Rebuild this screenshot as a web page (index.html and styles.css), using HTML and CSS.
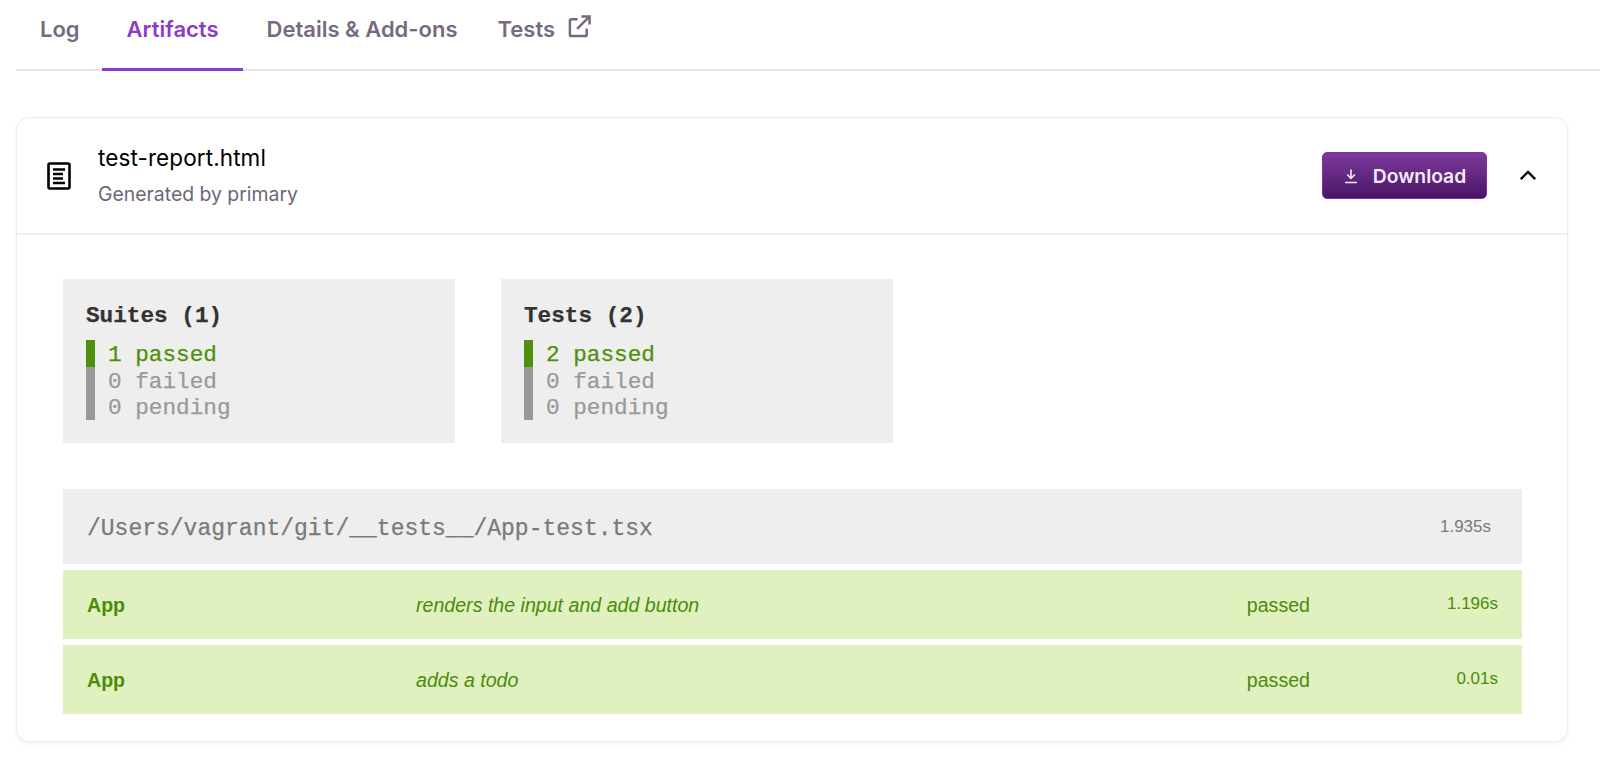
FILE: index.html
```html
<!DOCTYPE html>
<html lang="en">
<head>
<meta charset="utf-8">
<title>Artifacts</title>
<link rel="stylesheet" href="styles.css">
</head>
<body>
<nav class="tabs">
  <a class="tab tab-first">Log</a>
  <a class="tab active">Artifacts</a>
  <a class="tab">Details &amp; Add-ons</a>
  <a class="tab tab-ext">Tests
    <svg class="ext" viewBox="0 0 24 24" fill="none" stroke="currentColor" stroke-width="2.6"><path d="M10 4.500H3.500a1.500 1.500 0 0 0-1.500 1.500v14.500A1.500 1.500 0 0 0 3.500 22H18a1.500 1.500 0 0 0 1.500-1.500V14"/><path d="M9.500 14.500 22 2M14 1.500h8.500V10"/></svg>
  </a>
</nav>
<section class="card">
  <header class="card-head">
    <svg class="doc" viewBox="0 0 24 28" fill="none" stroke="#000"><rect x="1.500" y="1.500" width="21" height="25" rx="1.500" stroke-width="2.600"/><path stroke-width="2.400" d="M6 7.500h12M6 12h10M6 16.500h10M6 21h12"/></svg>
    <div class="file">
      <div class="file-name">test-report.html</div>
      <div class="file-sub">Generated by primary</div>
    </div>
    <button class="download">
      <svg class="dl" viewBox="0 0 16 16" fill="none" stroke="currentColor" stroke-width="1.600"><path d="M8 1.500v8.500M4.200 6.500 8 10.300l3.800-3.800M2 14.500h12"/></svg>
      Download
    </button>
    <svg class="chev" viewBox="0 0 20 12" fill="none" stroke="#000" stroke-width="2.600"><path d="M2 10.500 10 2.500l8 8"/></svg>
  </header>
  <div class="report">
    <div class="summary">
      <div class="box">
        <div class="box-title">Suites (1)</div>
        <ul class="stats">
          <li class="stat pass">1 passed</li>
          <li class="stat">0 failed</li>
          <li class="stat">0 pending</li>
        </ul>
      </div>
      <div class="box">
        <div class="box-title">Tests (2)</div>
        <ul class="stats">
          <li class="stat pass">2 passed</li>
          <li class="stat">0 failed</li>
          <li class="stat">0 pending</li>
        </ul>
      </div>
    </div>
    <div class="path-row">
      <span class="path">/Users/vagrant/git/__tests__/App-test.tsx</span>
      <span class="path-time">1.935s</span>
    </div>
    <div class="test-row">
      <span class="t-suite">App</span>
      <span class="t-name">renders the input and add button</span>
      <span class="t-status">passed</span>
      <span class="t-time">1.196s</span>
    </div>
    <div class="test-row">
      <span class="t-suite">App</span>
      <span class="t-name">adds a todo</span>
      <span class="t-status">passed</span>
      <span class="t-time">0.01s</span>
    </div>
  </div>
</section>
</body>
</html>
```
FILE: styles.css
```css
* { box-sizing: border-box; }
html, body { margin: 0; height: 762px; overflow: hidden; background: #fff; }
body { padding: 0 0 0 16px; font-family: Inter, "Liberation Sans", sans-serif; }

.tabs {
  display: flex;
  height: 71px;
  border-bottom: 2px solid #e8e5ea;
}
.tab {
  display: flex;
  align-items: flex-start;
  gap: 13px;
  height: 71px;
  padding: 14px 24px 0;
  font-size: 22px;
  line-height: 30px;
  font-weight: 600;
  color: #766a80;
}
.tab-first { padding-right: 22px; }
.tab.active {
  padding-left: 25px;
  color: #8b3cc9;
  border-bottom: 3px solid #8b3cc9;
}
.tab-ext { margin-left: -8px; }
.ext { width: 23px; height: 23px; margin-top: 1px; flex: none; }

.card {
  margin-top: 46px;
  width: 1552px;
  height: 625px;
  border: 1px solid #eeecee;
  border-radius: 13px;
  box-shadow: 0 2px 5px rgba(0, 0, 0, 0.05);
  background: #fff;
}
.card-head {
  display: flex;
  align-items: center;
  height: 117px;
  padding: 0 30px;
  border-bottom: 2px solid #f1eff2;
}
.doc { width: 24px; height: 28px; flex: none; }
.file { flex: 1; margin-left: 27px; margin-top: -1px; }
.file-name { font-size: 22.500px; line-height: 28px; letter-spacing: 0.100px; color: #000; }
.file-sub { font-size: 19.400px; line-height: 24px; margin-top: 10px; color: #6f6579; }
.download {
  display: flex;
  align-items: center;
  justify-content: center;
  gap: 14px;
  width: 165px;
  height: 47px;
  border: 1px solid #7f2fa6;
  border-radius: 5px;
  background: linear-gradient(#7d3a9c, #4a1566);
  color: #f3ecf6;
  font: 600 19.300px Inter, sans-serif;
}
.dl { width: 16px; height: 16px; flex: none; }
.chev { width: 18px; height: 12px; margin: -2px 0 0 32px; flex: none; }

.report { padding: 44px 45px 0 46px; }
.summary { display: flex; gap: 46px; }
.box {
  width: 392px;
  height: 164px;
  padding: 24px 23px 0;
  background: #eee;
  font-family: "Liberation Mono", monospace;
  font-size: 22.700px;
  line-height: 27px;
  -webkit-text-stroke: 0.250px currentColor;
}
.box-title { font-weight: 700; color: #333; height: 37px; }
.stats { list-style: none; margin: 0; padding: 0; }
.stat {
  height: 26.670px;
  line-height: 30px;
  padding-left: 13px;
  border-left: 9px solid #999;
  color: #999;
}
.stat.pass { color: #4f8f0b; border-left-color: #4f8f0b; }

.path-row {
  display: flex;
  justify-content: space-between;
  align-items: center;
  height: 75px;
  margin-top: 46px;
  padding: 4px 31px 0 24px;
  background: #eee;
  color: #7a7a7a;
}
.path { font: 23px "Liberation Mono", monospace; -webkit-text-stroke: 0.250px currentColor; }
.path-time { font: 17px "Liberation Sans", sans-serif; margin-top: -4px; }
.test-row {
  display: grid;
  grid-template-columns: 329px 1fr auto 188px;
  align-items: center;
  height: 69px;
  margin-top: 6px;
  padding: 2px 24px 0 24px;
  background: #e0f0bf;
  color: #4a8c0a;
  font: 19.600px "Liberation Sans", sans-serif;
}
.t-suite { font-weight: 700; }
.t-name { font-style: italic; }
.t-time { font-size: 17px; text-align: right; margin-top: -4px; }
```
